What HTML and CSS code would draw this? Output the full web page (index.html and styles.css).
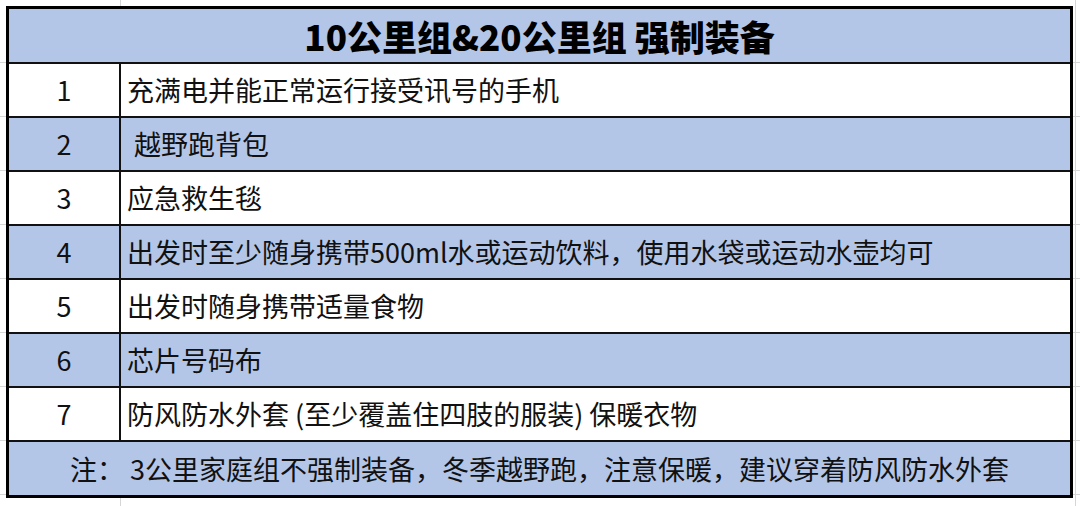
FILE: index.html
```html
<!DOCTYPE html>
<html lang="zh-CN">
<head>
<meta charset="utf-8">
<title>强制装备</title>
<link rel="stylesheet" href="styles.css">
</head>
<body>
<div class="sheet">
  <div class="table">
    <div class="title">10公里组&amp;20公里组 强制装备</div>
    <div class="row white"><div class="num">1</div><div class="item">充满电并能正常运行接受讯号的手机</div></div>
    <div class="row blue"><div class="num">2</div><div class="item indent">越野跑背包</div></div>
    <div class="row white"><div class="num">3</div><div class="item">应急救生毯</div></div>
    <div class="row blue"><div class="num">4</div><div class="item">出发时至少随身携带500ml水或运动饮料，使用水袋或运动水壶均可</div></div>
    <div class="row white"><div class="num">5</div><div class="item">出发时随身携带适量食物</div></div>
    <div class="row blue"><div class="num">6</div><div class="item">芯片号码布</div></div>
    <div class="row white"><div class="num">7</div><div class="item">防风防水外套 (至少覆盖住四肢的服装) 保暖衣物</div></div>
    <div class="note">注： 3公里家庭组不强制装备，冬季越野跑，注意保暖，建议穿着防风防水外套</div>
  </div>
</div>
</body>
</html>
```

FILE: styles.css
```css
html, body {
  margin: 0;
  padding: 0;
}
body {
  width: 1080px;
  height: 506px;
  overflow: hidden;
  background-color: #ffffff;
  background-image:
    linear-gradient(#d6d6d6, #d6d6d6),
    linear-gradient(#d6d6d6, #d6d6d6),
    repeating-linear-gradient(to bottom, #d6d6d6 0 1px, transparent 1px 54px);
  background-repeat: no-repeat;
  background-position: 120px 0, 1075px 0, 0 62px;
  background-size: 1px 100%, 1px 100%, 100% 100%;
  font-family: "Noto Sans CJK SC", "Noto Sans", sans-serif;
  color: #111;
}
.sheet {
  padding: 6px 7px 0 6px;
}
.table {
  width: 1067px;
  box-sizing: border-box;
  border: 3px solid #000;
  display: flex;
  flex-direction: column;
}
.title {
  height: 53px;
  background: #b4c6e7;
  font-weight: 900;
  font-size: 35px;
  line-height: 53px;
  text-align: center;
  color: #000;
}
.row {
  display: grid;
  grid-template-columns: 110px 1fr;
  height: 52px;
  border-top: 2px solid #111;
}
.row.white { background: #ffffff; }
.row.blue { background: #b4c6e7; }
.num {
  font-size: 27px;
  line-height: 52px;
  text-align: center;
}
.item {
  border-left: 2px solid #111;
  padding-left: 6px;
  font-size: 27px;
  line-height: 52px;
  white-space: nowrap;
}
.item.indent {
  padding-left: 13px;
}
.note {
  height: 53px;
  border-top: 2px solid #111;
  background: #b4c6e7;
  font-size: 27px;
  line-height: 53px;
  text-align: center;
}
```
